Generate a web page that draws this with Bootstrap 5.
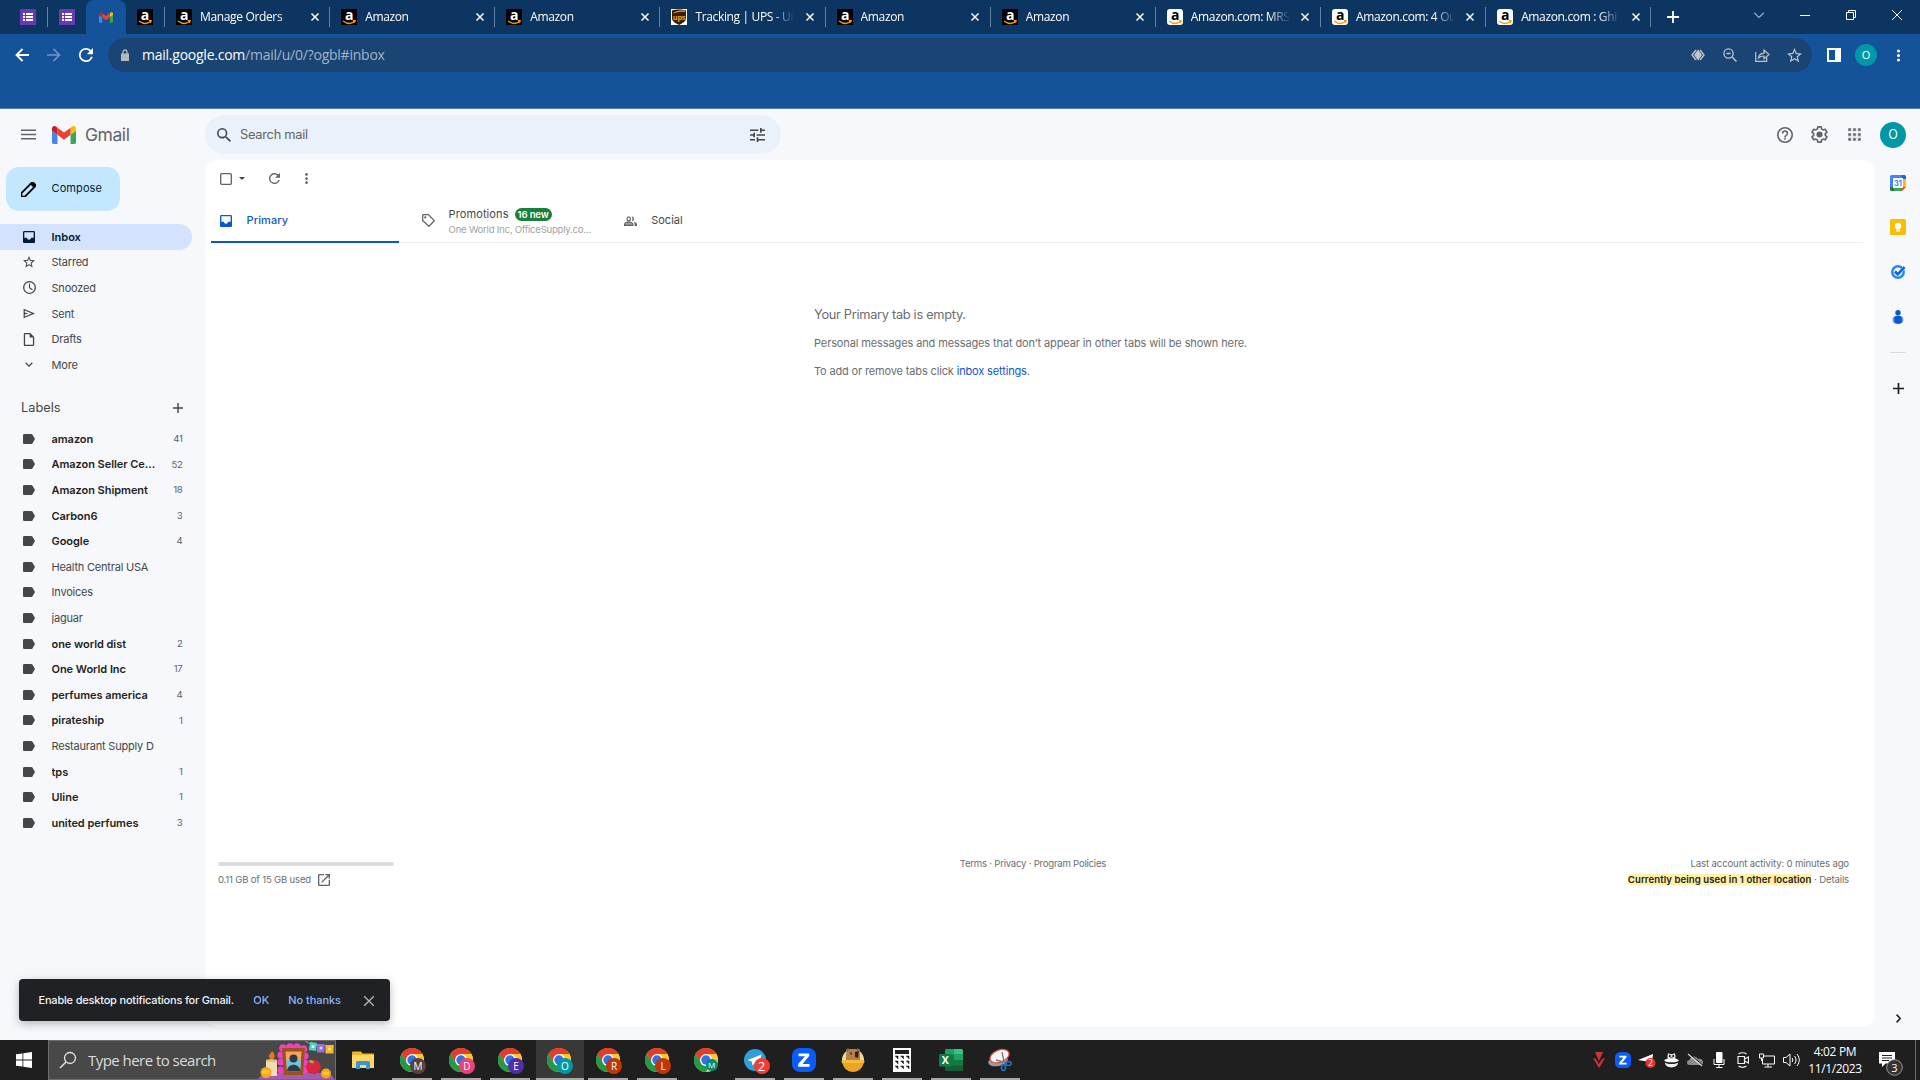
<!DOCTYPE html>
<html lang="en">
<head>
<meta charset="utf-8">
<title>Inbox - Gmail</title>
<link href="https://cdn.jsdelivr.net/npm/bootstrap@5.3.0/dist/css/bootstrap.min.css" rel="stylesheet">
<script src="https://cdn.jsdelivr.net/npm/bootstrap@5.3.0/dist/js/bootstrap.bundle.min.js"></script>
<style>
html,body{height:1080px;overflow:hidden}
body{background:#f6f8fc;font-family:Inter,"Noto Sans",sans-serif;font-size:11px;line-height:1.2;color:#444746}
svg{display:block;flex:none}
.win{font-family:"Open Sans","Noto Sans",sans-serif}
/* browser chrome */
.strip{height:34px;background:#0d3561;color:#fff;font-size:12px}
.vsep{width:1px;height:20px;background:#6684a3;flex:none}
.gtab{width:165.150px;height:34px;padding-left:11px;letter-spacing:-.35px;flex:none}
.gtab + .vsep{margin-left:-1px}
.gtab .ttl{width:100px;margin-left:8px;line-height:20px;overflow:hidden;white-space:nowrap;-webkit-mask-image:linear-gradient(90deg,#000 78%,transparent 99%)}
.gtab .cls{margin-left:9.500px}
.live{width:40px;height:34px;background:#14539a;border-radius:8px 8px 0 0}
.fav{width:16px;height:16px;background:#000;flex:none}
.fav.lite{background:#fff;border-radius:3px}
.bar{height:74px;background:#14539a}
.edge{height:1px;background:#4d7fb5}
.omni{margin-top:4px;height:34px;width:1704px;margin-left:14px;background:#194473;border-radius:17px;font-size:14px;letter-spacing:-.24px;color:#a3b4c7;padding:0 10px 0 12px}
.omni b{font-weight:400;color:#fff}
.dot{border-radius:50%;background:#0097a7;color:#fff;flex:none}
/* gmail */
.gm{height:931px}
.side{width:205px}
.brand{height:51px;padding-left:21px}
.wordm{font-size:17.5px;letter-spacing:-.45px;color:#5f6368;margin-left:9px}
.compose{margin:7px 0 0 6px;width:114px;height:44px;border-radius:13px;background:#c2e7ff;color:#001d35;padding-left:15px;letter-spacing:.1px}
.rows{list-style:none;margin:0;padding:0}
.rows li{height:25.6px;display:flex;align-items:center;padding-left:23px;width:192px;letter-spacing:-.2px}
.rows li span{margin-left:16.5px;width:107px;white-space:nowrap;overflow:hidden;line-height:16px}
.rows li i{font-style:normal;margin-left:auto;padding-right:9.5px;font-size:9.6px;letter-spacing:-.3px;color:#5f6368;font-weight:400}
.rows .un span{font-weight:600;color:#1f1f1f;letter-spacing:-.05px}
.rows .on{background:#d3e3fd;border-radius:0 13px 13px 0;color:#001d35;font-weight:600;letter-spacing:0}
.lab{height:48.45px;padding:12.500px 15px 0 21px;font-size:12.8px}
.find{width:576px;height:39px;border-radius:20px;background:#eaf1fb;margin-top:6px;padding:0 16px 0 12px;font-size:12.8px;color:#5f6368}
.topb{height:51px}
.pane{width:1670px;height:867px;background:#fff;border-radius:13px}
.tools{height:38px;padding:0 0 1px 15px}
.cats{height:45px;width:1652px;margin-left:6px;border-bottom:1px solid #eceff1}
.cat{width:201.6px;height:45px;padding-left:9px}
.cat.sel{width:188px;margin-right:13.6px;color:#0b57d0;border-bottom:2px solid #0b57d0;font-weight:500;letter-spacing:.1px;padding-top:2px}
.newb{background:#188038;color:#fff;font-size:9.6px;font-weight:600;border-radius:7px;height:13px;line-height:13px;width:37px;text-align:center;letter-spacing:-.15px}
.sub{font-size:9.6px;color:#a0a3a6;letter-spacing:-.25px;white-space:nowrap}
.blank{padding:62px 0 0 609px;color:#6b6e70;height:606px;letter-spacing:-.117px}
.blank p{margin:0}
.blank a{color:#0b57d0;text-decoration:none}
.foot{font-size:9.6px;color:#6b6e72;padding:0 26px 0 13px}
.hl{background:#fff1a8;font-weight:600;color:#222;padding:0;letter-spacing:.06px}
.rail{width:45px;padding:15px 0 0 1px;height:880px}
.note{position:absolute;left:19px;top:979px;width:371px;height:42px;background:#202124;border-radius:4px;color:#f1f3f4;padding:2px 13px 0 19.5px;font-weight:500;letter-spacing:-.19px;box-shadow:0 3px 8px rgba(60,64,67,.35)}
.note a{color:#8ab4f8;text-decoration:none;letter-spacing:-.05px}
/* taskbar */
.task{height:40px;background:#201f1f;color:#fff}
.start{width:48px}
.wsearch{width:288px;height:40px;background:#484848;border:1px solid #6e6e6e;font-size:15px;color:#dcdcdc;padding-left:10px}
.app{width:49px;height:40px;position:relative}
.app.run::after{content:"";position:absolute;left:4.5px;bottom:0;width:40px;height:2px;background:#aaa8a6}
.app.now{background:linear-gradient(90deg,transparent 0,transparent 1px,#383838 1px)}
.app.now::after{left:1px;width:48px}
.pb{position:absolute;width:16px;height:16px;border-radius:50%;left:22.5px;top:18px;font:10px/16px "Open Sans",sans-serif;text-align:center}
.tray{padding-right:4px}
.ti{width:24px;display:flex;justify-content:center;flex:none}
</style>
</head>
<body>
<svg width="0" height="0" class="position-absolute">
<defs>
<symbol id="form" viewBox="0 0 16 16"><rect width="16" height="16" rx="1" fill="#673ab7"/><path d="M3 4h2v2H3zM3 7h2v2H3zM3 10h2v2H3zM6 4h7v2H6zM6 7h7v2H6zM6 10h7v2H6z" fill="#fff"/></symbol>
<symbol id="gml" viewBox="52 42 88 66"><path fill="#4285f4" d="M58 108h14V74L52 59v43c0 3.320 2.690 6 6 6"/><path fill="#34a853" d="M120 108h14c3.320 0 6-2.690 6-6V59l-20 15"/><path fill="#fbbc04" d="M120 48v26l20-15v-8c0-7.420-8.470-11.650-14.400-7.200"/><path fill="#ea4335" d="M72 74V48l24 18 24-18v26L96 92"/><path fill="#c5221f" d="M52 51v8l20 15V48l-5.600-4.200c-5.940-4.450-14.400-.22-14.400 7.200"/></symbol>
<symbol id="amz" viewBox="0 0 16 16"><text x="8" y="10.500" text-anchor="middle" font-family="Open Sans" font-weight="700" font-size="14" fill="currentColor">a</text><path d="M2 12c4 3 8.500 3 11.500.6M11.800 11.700l2.300-.1-.6 2.200" fill="none" stroke="#f79a1b" stroke-width="1.300"/></symbol>
<symbol id="x" viewBox="0 0 10 10"><path d="M1.500 1.500l7 7M8.500 1.500l-7 7" stroke="currentColor" stroke-width="1.500"/></symbol>
<symbol id="label" viewBox="0 0 12 10"><path fill="#444746" d="M0 1.300C0 .6.600 0 1.300 0h6.900c.5 0 .9.200 1.200.6L12 5 9.400 9.400c-.3.400-.7.600-1.200.6H1.300C.6 10 0 9.400 0 8.700z"/></symbol>
<symbol id="inbox" viewBox="3 3 18 18"><path fill="currentColor" d="M19 3H5c-1.100 0-2 .9-2 2v14c0 1.100.9 2 2 2h14c1.100 0 2-.9 2-2V5c0-1.100-.9-2-2-2zm0 12h-4c0 1.660-1.350 3-3 3s-3-1.340-3-3H5V5h14v10z"/><path fill="currentColor" d="M4 13h5c0 1.700 1.300 3 3 3s3-1.300 3-3h5v7H4z"/></symbol>
<symbol id="star" viewBox="2 2 20 20"><path fill="currentColor" d="M22 9.240l-7.190-.62L12 2 9.190 8.630 2 9.240l5.460 4.730L5.820 21 12 17.270 18.180 21l-1.630-7.030zM12 15.400l-3.760 2.270 1-4.280-3.320-2.880 4.380-.38L12 6.100l1.710 4.040 4.380.38-3.320 2.880 1 4.280z"/></symbol>
<symbol id="clock" viewBox="2 2 20 20"><circle cx="12" cy="12" r="9" fill="none" stroke="currentColor" stroke-width="2"/><path d="M12 6v6.500l4.500 3" fill="none" stroke="currentColor" stroke-width="1.700"/></symbol>
<symbol id="send" viewBox="2 3 20 18"><path fill="currentColor" d="M3 20V4l19 8zm2-3l11.850-5L5 7v3.500l6 1.500-6 1.500z"/></symbol>
<symbol id="file" viewBox="4 2 16 20"><path fill="currentColor" d="M14 2H6c-1.100 0-2 .9-2 2v16c0 1.100.9 2 2 2h12c1.100 0 2-.9 2-2V8zm4 18H6V4h7v5h5z"/></symbol>
<symbol id="down" viewBox="6 8 12 8"><path fill="currentColor" d="M16.590 8.590L12 13.170 7.410 8.590 6 10l6 6 6-6z"/></symbol>
<symbol id="plus" viewBox="5 5 14 14"><path fill="currentColor" d="M19 13h-6v6h-2v-6H5v-2h6V5h2v6h6z"/></symbol>
<symbol id="refresh" viewBox="4 4 16 16"><path fill="currentColor" d="M17.650 6.350A7.960 7.960 0 0 0 12 4a8 8 0 1 0 7.730 10h-2.080A6 6 0 1 1 12 6c1.660 0 3.140.69 4.220 1.780L13 11h7V4z"/></symbol>
<symbol id="dots" viewBox="10 4 4 16"><path fill="currentColor" d="M12 8a2 2 0 1 0 0-4 2 2 0 0 0 0 4zm0 2a2 2 0 1 0 0 4 2 2 0 0 0 0-4zm0 6a2 2 0 1 0 0 4 2 2 0 0 0 0-4z"/></symbol>
<symbol id="mag" viewBox="3 3 17.500 17.500"><path fill="currentColor" d="M15.500 14h-.79l-.28-.27A6.470 6.470 0 0 0 16 9.500 6.500 6.500 0 1 0 9.500 16c1.610 0 3.090-.59 4.230-1.570l.27.28v.79l5 4.990L20.490 19zm-6 0a4.500 4.500 0 1 1 0-9 4.500 4.500 0 0 1 0 9z"/></symbol>
<symbol id="chrome" viewBox="0 0 24 24"><circle cx="12" cy="12" r="12" fill="#fbc116"/><path d="M1.600 6A12 12 0 0 1 22.400 6H12v6l-5.200 3z" fill="#e33b2e"/><path d="M1.600 6A12 12 0 0 0 12 24l5.200-9L12 12l-5.200 3z" fill="#229a4a"/><path d="M12 24a12 12 0 0 0 10.400-18H12l5.200 9z" fill="#fdc72e"/><circle cx="12" cy="12" r="6" fill="#fff"/><circle cx="12" cy="12" r="4.700" fill="#2f73e8"/></symbol>
<symbol id="zoomz" viewBox="0 0 24 24"><rect width="24" height="24" rx="8" fill="#0b5cff"/><path d="M6.500 5.500h10.700v2.500l-6.700 8h7v2.700H6.200V16l6.800-7.800H6.500z" fill="#fff"/></symbol>
</defs>
</svg>

<div class="win">
<div class="strip d-flex align-items-center">
  <div class="d-flex align-items-center" style="width:47px"><svg width="16" height="16" style="margin-left:20px"><use href="#form"/></svg></div>
  <div class="vsep"></div>
  <div style="width:38px;padding-left:11px"><svg width="16" height="16"><use href="#form"/></svg></div>
  <div class="live d-flex align-items-center justify-content-center"><svg width="14" height="11"><use href="#gml"/></svg></div>
  <div style="width:38px;padding-left:11px"><div class="fav"><svg width="16" height="16"><use href="#amz"/></svg></div></div>
  <div class="vsep"></div>
  <div class="gtab d-flex align-items-center"><div class="fav"><svg width="16" height="16"><use href="#amz"/></svg></div><div class="ttl">Manage Orders</div><svg class="cls" width="10" height="10"><use href="#x"/></svg></div>
  <div class="vsep"></div>
  <div class="gtab d-flex align-items-center"><div class="fav"><svg width="16" height="16"><use href="#amz"/></svg></div><div class="ttl">Amazon</div><svg class="cls" width="10" height="10"><use href="#x"/></svg></div>
  <div class="vsep"></div>
  <div class="gtab d-flex align-items-center"><div class="fav"><svg width="16" height="16"><use href="#amz"/></svg></div><div class="ttl">Amazon</div><svg class="cls" width="10" height="10"><use href="#x"/></svg></div>
  <div class="vsep"></div>
  <div class="gtab d-flex align-items-center"><div class="fav lite rounded-0"><svg width="16" height="16" viewBox="0 0 16 16"><path d="M1 1.500C5 .3 11 .3 15 1.500V9c0 3.500-3 5-7 7-4-2-7-3.500-7-7z" fill="#3a1c08"/><path d="M2 4c4-2.500 8-2.800 12-2.500V3C10 2.500 6 3 2 4.500z" fill="#f0a51c"/><text x="8" y="10.800" text-anchor="middle" font-size="7.500" font-weight="700" fill="#f0a51c">ups</text></svg></div><div class="ttl">Tracking | UPS - Ur</div><svg class="cls" width="10" height="10"><use href="#x"/></svg></div>
  <div class="vsep"></div>
  <div class="gtab d-flex align-items-center"><div class="fav"><svg width="16" height="16"><use href="#amz"/></svg></div><div class="ttl">Amazon</div><svg class="cls" width="10" height="10"><use href="#x"/></svg></div>
  <div class="vsep"></div>
  <div class="gtab d-flex align-items-center"><div class="fav"><svg width="16" height="16"><use href="#amz"/></svg></div><div class="ttl">Amazon</div><svg class="cls" width="10" height="10"><use href="#x"/></svg></div>
  <div class="vsep"></div>
  <div class="gtab d-flex align-items-center"><div class="fav lite text-black"><svg width="16" height="16"><use href="#amz"/></svg></div><div class="ttl">Amazon.com: MRS</div><svg class="cls" width="10" height="10"><use href="#x"/></svg></div>
  <div class="vsep"></div>
  <div class="gtab d-flex align-items-center"><div class="fav lite text-black"><svg width="16" height="16"><use href="#amz"/></svg></div><div class="ttl">Amazon.com: 4 Ou</div><svg class="cls" width="10" height="10"><use href="#x"/></svg></div>
  <div class="vsep"></div>
  <div class="gtab d-flex align-items-center"><div class="fav lite text-black"><svg width="16" height="16"><use href="#amz"/></svg></div><div class="ttl">Amazon.com : Ghi</div><svg class="cls" width="10" height="10"><use href="#x"/></svg></div>
  <div class="vsep"></div>
  <svg width="12" height="12" viewBox="0 0 12 12" style="margin-left:16px"><path d="M6 0v12M0 6h12" stroke="#fff" stroke-width="1.800"/></svg>
  <div class="d-flex align-items-center ms-auto" style="padding:0 18px 5px 0;gap:36px">
    <svg width="10" height="10" viewBox="0 0 10 10"><path d="M0 2.500l5 5 5-5" fill="none" stroke="#fff"/></svg>
    <svg width="10" height="10" viewBox="0 0 10 10"><path d="M0 5.500h10" stroke="#fff"/></svg>
    <svg width="10" height="10" viewBox="0 0 10 10"><path d="M.5 2.500h7v7h-7zM2.500 2.500v-2h7v7h-2" fill="none" stroke="#fff"/></svg>
    <svg width="10" height="10" viewBox="0 0 10 10"><path d="M0 0l10 10M10 0L0 10" stroke="#fff"/></svg>
  </div>
</div>
<div class="bar d-flex align-items-start">
  <div class="d-flex" style="padding:14px 0 0 15px;gap:18px;width:94px">
    <svg width="14" height="14" viewBox="0 0 14 14"><path d="M7.500 1L1.500 7l6 6M1.500 7H14" fill="none" stroke="#fff" stroke-width="1.900"/></svg>
    <svg width="14" height="14" viewBox="0 0 14 14"><path d="M6.500 1l6 6-6 6M12.500 7H0" fill="none" stroke="#7597c2" stroke-width="1.700"/></svg>
    <svg width="14" height="14" class="text-white"><use href="#refresh"/></svg>
  </div>
  <div class="omni d-flex align-items-center">
    <svg width="10" height="12" viewBox="0 0 10 12"><path d="M1 4.500h8V12H1z" fill="#b4b8bf"/><path d="M3 5V3a2 2 0 0 1 4 0v2" fill="none" stroke="#b4b8bf" stroke-width="1.300"/></svg>
    <div style="margin-left:12px"><b>mail.google.com</b>/mail/u/0/?ogbl#inbox</div>
    <div class="d-flex align-items-center ms-auto" style="gap:18px;color:#c0c5cb">
      <svg width="14" height="14" viewBox="0 0 14 14"><path d="M5 2L1 7l4 5M9 2l4 5-4 5" fill="none" stroke="currentColor" stroke-width="1.400"/><path d="M7 1.500L11 7l-4 5.500L3 7z" fill="currentColor"/></svg>
      <svg width="14" height="14" viewBox="0 0 14 14"><circle cx="5.500" cy="5.500" r="4.600" fill="none" stroke="currentColor" stroke-width="1.300"/><path d="M9 9l4.500 4.500M3.500 5.500h4" stroke="currentColor" stroke-width="1.500"/></svg>
      <svg width="15" height="14" viewBox="0 0 15 14" style="margin-right:-1px"><path d="M.7 4v9.300h11V9.500M3.500 10c.5-3.500 2.500-4.700 5.500-4.900V2l5 4.500L9 11V8c-2.500 0-4 .4-5.500 2z" fill="none" stroke="currentColor" stroke-width="1.200"/></svg>
      <svg width="15" height="15"><use href="#star"/></svg>
    </div>
  </div>
  <div class="d-flex align-items-center ms-auto" style="margin-top:4px;height:34px;padding-right:20px">
    <svg width="14" height="14" viewBox="0 0 14 14" style="margin-right:14px"><path d="M1 1h12v12H1z" fill="none" stroke="#fff" stroke-width="2"/><path d="M8 1h5v12H8z" fill="#fff"/></svg>
    <div class="dot d-flex align-items-center justify-content-center" style="width:22px;height:22px;margin-right:20px">O</div>
    <svg width="3" height="13" class="text-white"><use href="#dots"/></svg>
  </div>
</div>
<div class="edge"></div>
</div>

<div class="gm d-flex">
  <div class="side">
    <div class="brand d-flex align-items-center">
      <svg width="15" height="11" viewBox="0 0 15 11"><path d="M0 1.200h15M0 5.500h15M0 9.800h15" stroke="#5f6368" stroke-width="1.500"/></svg>
      <svg width="24" height="18" style="margin-left:16px"><use href="#gml"/></svg>
      <div class="wordm">Gmail</div>
    </div>
    <div class="compose d-flex align-items-center">
      <svg width="15" height="15" viewBox="3 3 18 18"><path d="M3.500 20.500h0v-4.200L15.700 4.100c.7-.7 1.500-.7 2.200 0l2 2c.7.700.7 1.500 0 2.200L7.700 20.500z" fill="none" stroke="#000" stroke-width="2.200"/><path d="M14 5.800l4.200 4.200 2.400-2.400-4.200-4.200z"/></svg>
      <div style="margin-left:15.500px">Compose</div>
    </div>
    <ul class="rows" style="margin-top:13px">
      <li class="on"><svg width="12" height="12"><use href="#inbox"/></svg><span>Inbox</span></li>
      <li><svg width="12" height="12"><use href="#star"/></svg><span>Starred</span></li>
      <li><svg width="13" height="13" style="margin:0 -.5px"><use href="#clock"/></svg><span>Snoozed</span></li>
      <li><svg width="12" height="11"><use href="#send"/></svg><span>Sent</span></li>
      <li><svg width="12" height="13"><use href="#file"/></svg><span>Drafts</span></li>
      <li><svg width="12" height="5"><use href="#down"/></svg><span>More</span></li>
    </ul>
    <div class="lab d-flex justify-content-between"><div style="padding-top:9.500px">Labels</div><svg width="10" height="10" style="margin:12.500px 7px 0 0"><use href="#plus"/></svg></div>
    <ul class="rows">
      <li class="un"><svg width="12" height="10"><use href="#label"/></svg><span>amazon</span><i>41</i></li>
      <li class="un"><svg width="12" height="10"><use href="#label"/></svg><span>Amazon Seller Ce...</span><i>52</i></li>
      <li class="un"><svg width="12" height="10"><use href="#label"/></svg><span>Amazon Shipment</span><i>18</i></li>
      <li class="un"><svg width="12" height="10"><use href="#label"/></svg><span>Carbon6</span><i>3</i></li>
      <li class="un"><svg width="12" height="10"><use href="#label"/></svg><span>Google</span><i>4</i></li>
      <li><svg width="12" height="10"><use href="#label"/></svg><span>Health Central USA</span></li>
      <li><svg width="12" height="10"><use href="#label"/></svg><span>Invoices</span></li>
      <li><svg width="12" height="10"><use href="#label"/></svg><span>jaguar</span></li>
      <li class="un"><svg width="12" height="10"><use href="#label"/></svg><span>one world dist</span><i>2</i></li>
      <li class="un"><svg width="12" height="10"><use href="#label"/></svg><span>One World Inc</span><i>17</i></li>
      <li class="un"><svg width="12" height="10"><use href="#label"/></svg><span>perfumes america</span><i>4</i></li>
      <li class="un"><svg width="12" height="10"><use href="#label"/></svg><span>pirateship</span><i>1</i></li>
      <li><svg width="12" height="10"><use href="#label"/></svg><span>Restaurant Supply D</span></li>
      <li class="un"><svg width="12" height="10"><use href="#label"/></svg><span>tps</span><i>1</i></li>
      <li class="un"><svg width="12" height="10"><use href="#label"/></svg><span>Uline</span><i>1</i></li>
      <li class="un"><svg width="12" height="10"><use href="#label"/></svg><span>united perfumes</span><i>3</i></li>
    </ul>
  </div>
  <div class="flex-grow-1">
    <div class="topb d-flex">
      <div class="find d-flex align-items-center">
        <svg width="14" height="14" style="color:#444746"><use href="#mag"/></svg>
        <div style="margin-left:9px;letter-spacing:-.25px">Search mail</div>
        <svg class="ms-auto" width="15" height="14" viewBox="3 3 18 18" preserveAspectRatio="none"><path fill="#444746" d="M3 17v2h6v-2H3zM3 5v2h10V5H3zm10 16v-2h8v-2h-8v-2h-2v6h2zM7 9v2H3v2h4v2h2V9H7zm14 4v-2H11v2h10zm-6-4h2V7h4V5h-4V3h-2v6z"/></svg>
      </div>
      <div class="d-flex align-items-center ms-auto" style="padding-right:14px;color:#5f6368">
        <svg width="16" height="16" viewBox="2 2 20 20" style="margin-right:18.500px"><path fill="currentColor" d="M11 18h2v-2h-2v2zm1-16a10 10 0 1 0 0 20 10 10 0 0 0 0-20zm0 18a8 8 0 1 1 0-16 8 8 0 0 1 0 16zm0-14a4 4 0 0 0-4 4h2a2 2 0 1 1 4 0c0 2-3 1.750-3 5h2c0-2.250 3-2.500 3-5a4 4 0 0 0-4-4z"/></svg>
        <svg width="17" height="17" viewBox="2 2 20 20" style="margin-right:20px"><path d="M10 3h4l.5 2.600 1.800 1L18.800 5.800l2 3.400-2 1.800v2l2 1.800-2 3.400-2.500-.8-1.800 1L14 21h-4l-.5-2.600-1.800-1-2.500.8-2-3.400 2-1.800v-2l-2-1.800 2-3.400 2.500.8 1.800-1z" fill="none" stroke="currentColor" stroke-width="1.900" stroke-linejoin="round"/><circle cx="12" cy="12" r="3.600" fill="currentColor"/></svg>
        <svg width="13" height="13" viewBox="4 4 16 16" style="margin-right:19px"><path fill="currentColor" d="M4 8h4V4H4zm6 12h4v-4h-4zm-6 0h4v-4H4zm0-6h4v-4H4zm6 0h4v-4h-4zm6-10v4h4V4zm-6 4h4V4h-4zm6 6h4v-4h-4zm0 6h4v-4h-4z" stroke="#f6f8fc" stroke-width=".7"/></svg>
        <div class="dot d-flex align-items-center justify-content-center" style="width:26px;height:26px;font-size:12.500px">O</div>
      </div>
    </div>
    <div class="d-flex">
      <div class="pane">
        <div class="tools d-flex align-items-center">
          <svg width="12" height="12" viewBox="0 0 12 12"><rect x=".7" y=".7" width="10.600" height="10.600" rx="1" fill="none" stroke="#5f6368" stroke-width="1.300"/></svg>
          <svg width="6" height="3" viewBox="0 0 6 3" style="margin-left:7px"><path d="M0 0h6L3 3z" fill="#444746"/></svg>
          <svg width="11" height="11" style="margin-left:23.500px;color:#5f6368"><use href="#refresh"/></svg>
          <svg width="3" height="11" style="margin-left:25px;color:#5f6368"><use href="#dots"/></svg>
        </div>
        <div class="cats d-flex">
          <div class="cat sel d-flex align-items-center"><svg width="12" height="12"><use href="#inbox"/></svg><div style="margin-left:14.500px">Primary</div></div>
          <div class="cat d-flex align-items-center"><svg width="13" height="13" viewBox="2 2 20 20"><path fill="none" stroke="#5f6368" stroke-width="2" stroke-linejoin="round" d="M3 4v8l9.500 9 8.500-8.500L12 3H4z"/><circle cx="7" cy="7.300" r="1.700" fill="#5f6368"/></svg>
            <div style="margin-left:14px"><div class="d-flex align-items-center" style="margin-top:2px;letter-spacing:.1px">Promotions<div class="newb" style="margin-left:6px">16 new</div></div><div class="sub" style="margin-top:3px">One World Inc, OfficeSupply.co...</div></div></div>
          <div class="cat d-flex align-items-center"><svg width="13" height="10" viewBox="1 4 22 16" preserveAspectRatio="none" style="margin-left:.5px"><circle cx="9" cy="8.500" r="3" fill="none" stroke="#5f6368" stroke-width="2"/><path d="M2 19v-2c0-2 4-3.500 7-3.500s7 1.500 7 3.500v2z" fill="#9a9da1" stroke="#5f6368" stroke-width="2"/><path d="M14 4.500a4 4 0 0 1 0 8c1.800-2.500 1.800-5.500 0-8zM17.500 13c3 .6 5.500 2 5.500 4v3h-4v-3c0-1.600-.5-3-1.500-4z" fill="#5f6368"/></svg><div style="margin-left:14.500px">Social</div></div>
        </div>
        <div class="blank">
          <p style="font-size:12.800px;padding-top:2px;letter-spacing:-.3px">Your Primary tab is empty.</p>
          <p style="margin-top:15px">Personal messages and messages that don’t appear in other tabs will be shown here.</p>
          <p style="margin-top:14.500px;letter-spacing:-.15px">To add or remove tabs click <a href="#">inbox settings</a>.</p>
        </div>
        <div class="foot d-flex justify-content-between" style="margin-top:7px">
          <div style="padding-top:6px"><div style="width:176px;height:4px;border-radius:2px;background:#dadce0"></div>
            <div class="d-flex align-items-center" style="margin-top:8px;letter-spacing:-.2px">0.11 GB of 15 GB used<svg width="12" height="12" viewBox="3 3 18 18" style="margin-left:7px"><path fill="#5f6368" d="M19 19H5V5h7V3H5a2 2 0 0 0-2 2v14c0 1.100.89 2 2 2h14c1.100 0 2-.9 2-2v-7h-2v7zM14 3v2h3.590l-9.830 9.830 1.410 1.410L19 6.410V10h2V3h-7z"/></svg></div></div>
          <div style="margin-left:44px;padding-top:2px;letter-spacing:-.24px">Terms · Privacy · Program Policies</div>
          <div class="text-end" style="line-height:16px;letter-spacing:-.14px">Last account activity: 0 minutes ago<br><span class="hl">Currently being used in 1 other location</span> · Details</div>
        </div>
      </div>
      <div class="rail d-flex flex-column align-items-center">
        <svg width="16" height="16" viewBox="0 0 16 16"><path d="M0 1.500A1.500 1.500 0 0 1 1.500 0H13v4H4v8H0z" fill="#4285f4"/><path d="M12 0h2.500A1.500 1.500 0 0 1 16 1.500V4h-4z" fill="#1967d2"/><path d="M12 4h4v8h-4z" fill="#fbbc04"/><path d="M4 12h8v4H4z" fill="#34a853"/><path d="M0 12h4v4H1.500A1.500 1.500 0 0 1 0 14.500z" fill="#188038"/><path d="M12 12h4l-4 4z" fill="#ea4335"/><path d="M3 3h10v10H3z" fill="#fff"/><text x="8" y="11" font-size="7.500" text-anchor="middle" fill="#2a73e8" font-weight="600">31</text></svg>
        <svg width="16" height="16" viewBox="0 0 16 16" style="margin-top:28px"><rect width="16" height="16" rx="1.500" fill="#fbbc04"/><circle cx="8" cy="7" r="3.200" fill="#fff"/><path d="M6 9h4v1.500H6zM6 11.200h4v1.200H6z" fill="#fff"/></svg>
        <svg width="16" height="16" viewBox="0 0 16 16" style="margin-top:29px"><circle cx="8" cy="8" r="5.700" fill="none" stroke="#2684fc" stroke-width="2.500"/><path d="M5 7.500L7.800 10.300 14.500 3.300" fill="none" stroke="#a9cbfb" stroke-width="3.200"/><path d="M5 7.500L7.800 10.300 14.500 3" fill="none" stroke="#0b66da" stroke-width="2.500"/></svg>
        <svg width="14" height="14" viewBox="0 0 14 14" style="margin-top:30px"><rect x="1.500" y="6" width="11" height="7.500" rx="3.700" fill="#669df6"/><circle cx="7" cy="2.800" r="2.700" fill="#0b57d0"/><rect x="3.300" y="5.700" width="7.500" height="8" rx="3" fill="#0b57d0"/></svg>
        <div style="width:16px;height:1px;background:#dadce0;margin-top:28px"></div>
        <svg width="11" height="11" viewBox="0 0 11 11" style="margin-top:30px"><path d="M5.500 0v11M0 5.500h11" stroke="#1f1f1f" stroke-width="1.700"/></svg>
        <svg width="5" height="9" viewBox="0 0 5 9" class="mt-auto" style="margin-bottom:17px"><path d="M.6.600l3.600 3.900L.6 8.400" fill="none" stroke="#222" stroke-width="1.600"/></svg>
      </div>
    </div>
  </div>
</div>

<div class="note d-flex align-items-center"><div>Enable desktop notifications for Gmail.</div><a href="#" style="margin-left:19.500px">OK</a><a href="#" style="margin-left:19px">No thanks</a><svg class="ms-auto" width="12" height="12" viewBox="0 0 10 10" style="color:#b5b7ba;margin-right:2px"><path d="M1 1l8 8M9 1L1 9" stroke="currentColor" stroke-width="1.100"/></svg></div>

<div class="task d-flex align-items-center win">
  <div class="start d-flex justify-content-center"><svg width="16" height="16" viewBox="0 0 16 16"><path d="M0 2.300L6.500 1.400v6.200H0zM7.300 1.300L16 0v7.600H7.300zM0 8.400h6.500v6.200L0 13.700zM7.300 8.400H16V16l-8.700-1.300z" fill="#fff"/></svg></div>
  <div class="wsearch d-flex align-items-center">
    <svg width="18" height="18" viewBox="0 0 18 18"><circle cx="11" cy="7" r="5.500" fill="none" stroke="#e6e6e6" stroke-width="1.300"/><path d="M7 11L1 17" stroke="#e6e6e6" stroke-width="1.400"/></svg>
    <div style="margin-left:11px;letter-spacing:-.54px;white-space:nowrap">Type here to search</div>
    <svg class="ms-auto" width="77" height="38" viewBox="258 1041 77 38">
      <path d="M258 1079c3-4 8-6 16-6h48c8 0 11 3 12 6z" fill="#a65cae"/>
      <rect x="266" y="1060" width="11" height="16" rx="1" fill="#f0deb0"/><ellipse cx="271.500" cy="1060.500" rx="5.500" ry="1.500" fill="#d9c08a"/><path d="M272 1051c4 4 3 8 0 8s-4-3-2-5z" fill="#f2760c"/>
      <g fill="#f03fc2"><circle cx="283" cy="1048" r="3.800"/><circle cx="290" cy="1047" r="3.800"/><circle cx="297" cy="1047" r="3.800"/><circle cx="303.500" cy="1049" r="3.800"/><circle cx="305" cy="1056" r="3.600"/><circle cx="305" cy="1063" r="3.600"/><circle cx="305" cy="1070" r="3.600"/><circle cx="281" cy="1055" r="3.600"/><circle cx="281" cy="1062" r="3.600"/><circle cx="281" cy="1070" r="3.600"/></g>
      <path d="M282 1048h23l-2 27h-19z" fill="#96541f"/><path d="M285.500 1051.500h16l-1.500 20h-13z" fill="#f7a35c"/><path d="M286.500 1060h14.500l-1 11.500h-13z" fill="#74c3dc"/><circle cx="293.500" cy="1058.500" r="4" fill="#2c3c4a"/><path d="M287 1071.500c0-9 13-9 13.500 0z" fill="#2c3c4a"/>
      <circle cx="313.500" cy="1067" r="7.300" fill="#d82840"/><path d="M309 1060c3 0 5 1 5 3-3 1-5-1-5-3z" fill="#8bc53f"/>
      <circle cx="266" cy="1072.500" r="5.500" fill="#f8a617"/><path d="M262 1072c2-3 6-3 8 0-2 3-6 3-8 0z" fill="#ffc93c"/><circle cx="326" cy="1073.500" r="5" fill="#f8a617"/><path d="M322.500 1073c2-2 5-2 7 0-2 3-5 3-7 0z" fill="#ffc93c"/>
      <path d="M305 1041c8 5 18 5 29 5" stroke="#999" fill="none"/><path d="M310 1042l7 1-1 8-7-1z" fill="#4fd1c5"/><path d="M317 1044h7.500v8.500H317z" fill="#9a6fd8"/><path d="M325.500 1045h8v8.500h-8z" fill="#fbb62a"/><circle cx="313" cy="1046.500" r="1.500" fill="#d8fff9"/><circle cx="321" cy="1048" r="1.500" fill="#e5d3ff"/><circle cx="329.500" cy="1049" r="1.500" fill="#ffe9ae"/>
    </svg>
  </div>
  <div class="app d-flex align-items-center justify-content-center" style="margin-left:2.500px"><svg width="22" height="18" viewBox="0 0 22 18"><path d="M0 1.500A1 1 0 0 1 1 .500h8l1.500 2H21a1 1 0 0 1 1 1V17H0z" fill="#f0b429"/><path d="M0 4h22v13H0z" fill="#ffd766"/><path d="M4 18v-6.500a1.500 1.500 0 0 1 1.500-1.500h11a1.500 1.500 0 0 1 1.500 1.500V18h-4v-4H8v4z" fill="#3994d8"/></svg></div>
  <div class="app run d-flex align-items-center justify-content-center"><svg width="24" height="24"><use href="#chrome"/></svg><div class="pb" style="background:#5d4037">M</div></div>
  <div class="app run d-flex align-items-center justify-content-center"><svg width="24" height="24"><use href="#chrome"/></svg><div class="pb" style="background:#ec407a">D</div></div>
  <div class="app run d-flex align-items-center justify-content-center"><svg width="24" height="24"><use href="#chrome"/></svg><div class="pb" style="background:#512da8">E</div></div>
  <div class="app run now d-flex align-items-center justify-content-center"><svg width="24" height="24"><use href="#chrome"/></svg><div class="pb" style="background:#0097a7">O</div></div>
  <div class="app run d-flex align-items-center justify-content-center"><svg width="24" height="24"><use href="#chrome"/></svg><div class="pb" style="background:#bf360c">R</div></div>
  <div class="app run d-flex align-items-center justify-content-center"><svg width="24" height="24"><use href="#chrome"/></svg><div class="pb" style="background:#bf360c">L</div></div>
  <div class="app d-flex align-items-center justify-content-center"><svg width="24" height="24"><use href="#chrome"/></svg><div class="pb" style="background:#00897b;width:12px;height:12px;left:24px;top:19px;font-size:8px;line-height:12px">M</div></div>
  <div class="app run d-flex align-items-center justify-content-center"><svg width="22" height="22" viewBox="0 0 24 24"><circle cx="12" cy="12" r="12" fill="#2ba0dc"/><path d="M4 12l15-6-3 14-5-4-2 2-.5-4.500z" fill="#fff"/></svg><div class="pb" style="background:#f23c34;font-size:13px;left:23px">2</div></div>
  <div class="app run d-flex align-items-center justify-content-center"><svg width="24" height="24"><use href="#zoomz"/></svg></div>
  <div class="app run d-flex align-items-center justify-content-center"><svg width="24" height="24" viewBox="0 0 24 24"><circle cx="12" cy="12" r="11" fill="#e8dc9a"/><circle cx="7" cy="2.500" r="2" fill="#9b6a3c"/><circle cx="17" cy="2.500" r="2" fill="#9b6a3c"/><path d="M5 14V7c0-8 14-8 14 0v7z" fill="#b5804d"/><path d="M14 4l4-1-1 7-3-1z" fill="#3b1d10"/><circle cx="10" cy="5.500" r="1" fill="#222"/><path d="M1.500 13h21c0 14.500-21 14.500-21 0z" fill="#eba51e"/><rect x=".5" y="12" width="23" height="3" rx="1.500" fill="#f6bd3a"/></svg></div>
  <div class="app run d-flex align-items-center justify-content-center"><svg width="18" height="24" viewBox="0 0 18 24"><path d="M0 0h18v24H0z" fill="#fff"/><path d="M2 2h14v4H2z" fill="#201f1f"/><path d="M2 8h3v3M7.500 8h3v3M13 8h3v3M2 13h3v3M7.500 13h3v3M13 13h3v3M2 18h3v3M7.500 18h3v3M13 18h3v3" fill="#201f1f" stroke="#201f1f" stroke-width=".6"/></svg></div>
  <div class="app run d-flex align-items-center justify-content-center"><svg width="24" height="22" viewBox="0 0 24 22"><rect x="6" width="18" height="22" rx="1.500" fill="#107c41"/><path d="M6 1.500A1.500 1.500 0 0 1 7.500 0H15v5.500H6z" fill="#21a366"/><path d="M15 0h7.500A1.500 1.500 0 0 1 24 1.500v4h-9z" fill="#33c481"/><path d="M15 5.500h9V11h-9z" fill="#21a366"/><path d="M6 16.500h18V22H6z" fill="#185c37"/><rect y="5" width="12.500" height="12.500" rx="1" fill="#107c41"/><text x="6.200" y="15" font-size="10.500" font-weight="700" fill="#fff" text-anchor="middle">X</text></svg></div>
  <div class="app run d-flex align-items-center justify-content-center"><svg width="24" height="24" viewBox="0 0 24 24"><ellipse cx="10" cy="13" rx="10" ry="5" fill="#999" transform="rotate(-12 10 13)"/><ellipse cx="11.500" cy="8" rx="10" ry="6" fill="#f6f6f6" stroke="#e0504a" stroke-width="1.200" transform="rotate(-22 12 8)"/><path d="M14 4l2.500 12M8 12l11 3" stroke="#777" stroke-width="1.300"/><ellipse cx="15.500" cy="19.500" rx="2" ry="3" fill="none" stroke="#1b77c5" stroke-width="1.600"/><ellipse cx="20.500" cy="15.500" rx="2.600" ry="2" fill="none" stroke="#1b77c5" stroke-width="1.600"/></svg></div>

  <div class="tray d-flex align-items-center ms-auto">
    <div class="ti"><svg width="12" height="16" viewBox="0 0 12 16"><path d="M2 0h8L6 9zM0 6l6 10 6-10-3 1-3 5-3-5z" fill="#d13438"/></svg></div>
    <div class="ti"><svg width="16" height="16"><use href="#zoomz"/></svg></div>
    <div class="ti"><svg width="18" height="16" viewBox="0 0 18 16"><path d="M0 8l15-6-1 8-8-1z" fill="#fff"/><circle cx="12.500" cy="11" r="5" fill="#e5322d"/><text x="12.500" y="14" font-size="8.500" fill="#fff" text-anchor="middle">2</text></svg></div>
    <div class="ti"><svg width="15" height="16" viewBox="0 0 15 16"><path d="M3.500 7V3l1-2 1.500 1h3l1.500-1 1 2v4z" fill="#ddd"/><circle cx="5.800" cy="4" r=".9"/><circle cx="9.200" cy="4" r=".9"/><path d="M6 6h3" stroke="#222"/><ellipse cx="7.500" cy="8.300" rx="7.300" ry="2" fill="#fff"/><path d="M1 10.500c3 2 10 2 13 0 0 6.500-13 6.500-13 0z" fill="#eee"/></svg></div>
    <div class="ti"><svg width="16" height="14" viewBox="0 0 16 14"><path d="M2.500 12a2.500 2.500 0 0 1 0-5C3 3 9 2 11 6c3-1 5 1 5 3.500S15 12 13.500 12z" fill="#8c8c8c"/><path d="M1.800.2l14 12" stroke="#201f1f"/><path d="M1 1l14 12" stroke="#ddd" stroke-width="1.100"/></svg></div>
    <div class="ti"><svg width="12" height="16" viewBox="0 0 12 16"><rect x="3" width="6.500" height="11" rx="1" fill="#fff"/><path d="M1 7v5.500h10V7M6 12.500V15M3 15.500h6.500" fill="none" stroke="#fff"/></svg></div>
    <div class="ti"><svg width="12" height="16" viewBox="0 0 12 16"><path d="M1 4.500h6.500v7H1zM7.500 7l4-2v6l-4-2M1.500 2c2-1.700 6-1.700 8 0M1.500 14c2 1.700 6 1.700 8 0" fill="none" stroke="#eee" stroke-width="1.200"/></svg></div>
    <div class="ti"><svg width="16" height="15" viewBox="0 0 16 15"><path d="M5 3h10.500v8H3.500V6M9 11v3M5.500 14H13M.5 1h4v4h-4zM2.500 5v3" fill="none" stroke="#fff"/></svg></div>
    <div class="ti"><svg width="17" height="14" viewBox="0 0 17 14"><path d="M.5 4.500H3l4-3.500v12L3 9.500H.5zM9 5c1 1.300 1 2.700 0 4M11.500 3c2 2.500 2 5.500 0 8M14 1c3 4 3 8 0 12" fill="none" stroke="#fff"/></svg></div>
    <div class="text-center" style="width:64px;line-height:17.500px;font-size:12px;letter-spacing:-.35px">4:02 PM<br>11/1/2023</div>
    <div class="position-relative" style="width:48px;height:40px"><svg width="26" height="26" viewBox="0 0 26 26" class="position-absolute" style="left:11.500px;top:11px"><path d="M0 1h16v11.500H6.500L3 16v-3.500H0z" fill="#fff"/><path d="M3 4.500h10M3 7h10M3 9.500h7" stroke="#201f1f"/><circle cx="15.500" cy="16.500" r="7.800" fill="#333" stroke="#999"/><text x="15.500" y="20.500" font-size="11" fill="#fff" text-anchor="middle">3</text></svg></div>
    <div style="width:1px;height:40px;background:#6b6b6b"></div>
  </div>
</div>
</body>
</html>
